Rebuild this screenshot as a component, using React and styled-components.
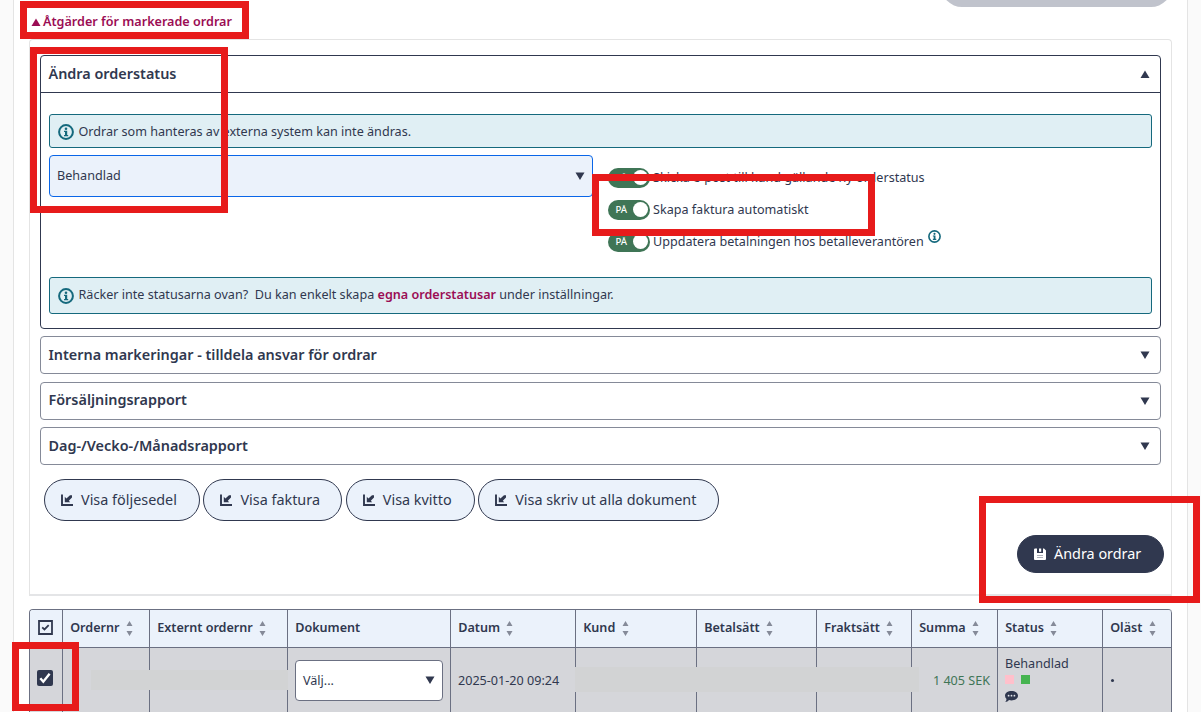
import React from "react";
import styled, { createGlobalStyle } from "styled-components";

const GlobalStyle = createGlobalStyle`
  * {
    box-sizing: border-box;
  }

  body {
    margin: 0;
    background: #fafafa;
    color: #30384f;
    font-family: "Noto Sans", sans-serif;
    font-size: 13px;
    overflow: hidden;
  }
`;

const Page = styled.div`
  position: relative;
  width: 1201px;
  height: 712px;
  overflow: hidden;
`;

const Content = styled.main`
  width: 1175px;
  height: 712px;
  margin-left: 13px;
  padding: 0 15px;
  background: #fff;
  border: solid #e4e4e4;
  border-width: 0 1px;
`;

const TopBar = styled.div`
  display: flex;
  justify-content: flex-end;
  height: 7px;
  overflow: hidden;
`;

const DisabledButton = styled.div`
  width: 231px;
  height: 42px;
  margin-top: -35px;
  border-radius: 21px;
  background: #c0c3cc;
`;

const Toggler = styled.div`
  display: flex;
  align-items: center;
  gap: 2px;
  height: 32px;
  padding: 0 0 4px 2px;
  color: #9b0d54;
  font-size: 12.6px;
  font-weight: 600;

  svg {
    margin-top: 2px;
  }
`;

const Actions = styled.section`
  height: 557px;
  padding: 15px 10px 0;
  border: 1px solid #e4e4e4;
  border-bottom: 2px solid #e4e5e7;
  border-radius: 4px 4px 0 0;
`;

const Panel = styled.div`
  height: ${(p) => (p.$open ? 274 : 38)}px;
  margin-bottom: ${(p) => p.$gap}px;
  border: 1px solid ${(p) => (p.$open ? "#30384f" : "#858a98")};
  border-radius: 4px;
`;

const PanelHeader = styled.div`
  display: flex;
  align-items: center;
  justify-content: space-between;
  height: ${(p) => (p.$open ? 37 : 36)}px;
  padding: 0 10px ${(p) => p.$lift ?? 1}px 7.5px;
  border-bottom: ${(p) => (p.$open ? "1px solid #30384f" : "none")};
  font-size: 14.4px;
  font-weight: 600;
  line-height: 20px;

  svg {
    margin-top: ${(p) => p.$lift ?? 1}px;
  }
`;

const PanelBody = styled.div`
  padding: 21px 8px 0;
`;

const Info = styled.div`
  display: flex;
  align-items: center;
  height: ${(p) => p.$height}px;
  padding: 0 0 ${(p) => p.$lift || 0}px 8px;
  border: 1px solid #15697d;
  border-radius: 3px;
  background: #e0eff4;
  font-size: 12.6px;
  white-space: pre;

  svg {
    flex: none;
    margin: ${(p) => p.$lift || 2}px 4.5px 0 0;
  }
`;

const Link = styled.a`
  color: #9b0d54;
  font-weight: 600;
`;

const StatusRow = styled.div`
  display: flex;
  gap: 15px;
  height: 129px;
  padding-top: 7px;
`;

const Select = styled.div`
  display: flex;
  align-items: center;
  justify-content: space-between;
  width: ${(p) => p.$width}px;
  height: ${(p) => p.$height}px;
  padding: 0 7px ${(p) => (p.$active ? 2 : 0)}px;
  border: 1px solid ${(p) => (p.$active ? "#0a66e8" : "#6b7082")};
  border-radius: 4px;
  background: ${(p) => (p.$active ? "#ebf2fb" : "#fff")};
  font-size: 12.6px;

  svg {
    margin-top: ${(p) => (p.$active ? 2 : 0)}px;
  }
`;

const Switches = styled.div`
  display: flex;
  flex-direction: column;
  gap: 12px;
  padding-top: 12px;
`;

const SwitchRow = styled.div`
  display: flex;
  align-items: center;
  height: 20px;
  font-size: 12.6px;
  white-space: nowrap;

  > svg {
    margin: -9px 0 0 4px;
  }
`;

const Switch = styled.span`
  display: flex;
  align-items: center;
  justify-content: space-between;
  width: 42px;
  height: 20px;
  margin: 1px 3px 0 0;
  padding: 0 2px 0 7.5px;
  border-radius: 10px;
  background: #3f7556;
  color: #fff;
  font-size: 9.6px;
  font-weight: 500;
`;

const Knob = styled.span`
  width: 15px;
  height: 15px;
  border-radius: 50%;
  background: #fff;
`;

const DocumentButtons = styled.div`
  display: flex;
  gap: 3.4px;
  padding-left: 4px;
`;

const Button = styled.button`
  display: flex;
  align-items: center;
  width: ${(p) => p.$width}px;
  height: ${(p) => (p.$primary ? 38 : 42)}px;
  padding: 0 0 2px 16px;
  border: 1px solid #30384f;
  border-radius: 21px;
  background: ${(p) => (p.$primary ? "#30384f" : "#ebf2fb")};
  color: ${(p) => (p.$primary ? "#fff" : "#30384f")};
  font: 400 14.4px "Noto Sans", sans-serif;
  white-space: nowrap;

  svg {
    flex: none;
    margin: 2px 8px 0 0;
  }
`;

const SubmitRow = styled.div`
  display: flex;
  justify-content: flex-end;
  padding: 14px 0 0;
  margin-right: -3px;
`;

const Table = styled.div`
  display: grid;
  grid-template-columns: 33px 87px 138px 163px 125px 121px 120px 95px 86px 105px 69px;
  width: 1143px;
  margin-top: 13px;
  border-left: 1px solid #6b7082;
  border-top: 1px solid #6b7082;
  border-radius: 4px 4px 0 0;
  overflow: hidden;
`;

const HeadCell = styled.div`
  display: flex;
  align-items: center;
  gap: 6.4px;
  height: 38px;
  padding: 0 0 2px 7.2px;
  border: solid #6b7082;
  border-width: 0 1px 1px 0;
  background: #ebf2fb;
  font-size: 12.6px;
  font-weight: 600;
  white-space: nowrap;

  svg {
    margin-top: 1px;
  }
`;

const LastHeadCell = styled(HeadCell)`
  border-top-right-radius: 3px;
`;

const SelectAllCell = styled(HeadCell)`
  padding: 0 0 3px 8px;
`;

const Cell = styled.div`
  display: flex;
  align-items: center;
  justify-content: ${(p) => (p.$right ? "flex-end" : "flex-start")};
  height: 66px;
  padding: 0 7px ${(p) => (p.$lift ?? 1)}px;
  border-right: 1px solid #6b7082;
  background: #d5d6da;
  color: ${(p) => (p.$right ? "#3f7556" : "#30384f")};
  font-size: 12.6px;
  white-space: nowrap;
`;

const Status = styled.div`
  display: flex;
  flex-direction: column;
  height: 66px;
  padding-top: 7px;
  line-height: 18px;

  svg {
    margin-top: 7px;
  }
`;

const Marks = styled.div`
  display: flex;
  gap: 7px;
  margin-top: 2px;
`;

const Mark = styled.span`
  width: 9px;
  height: 9px;
  background: ${(p) => p.$color};
`;

const Bullet = styled.span`
  width: 3px;
  height: 3px;
  margin-left: 1px;
  border-radius: 50%;
  background: #30384f;
`;

// Covers customer data in the table row
const Redaction = styled.div`
  position: absolute;
  left: ${(p) => p.$x}px;
  top: ${(p) => p.$y}px;
  width: ${(p) => p.$w}px;
  height: ${(p) => p.$h}px;
  background: #d2d3d4;
`;

const Highlight = styled.div`
  position: absolute;
  left: ${(p) => p.$x}px;
  top: ${(p) => p.$y}px;
  width: ${(p) => p.$w}px;
  height: ${(p) => p.$h}px;
  border: 7px solid #e71b1b;
`;

const Triangle = ({ up, size = 10 }) => (
  <svg width={size} height={size * 0.85} viewBox="0 0 10 8.5">
    <path d={up ? "M5 0.5 9.5 8H0.5Z" : "M5 8 9.5 0.5H0.5Z"} fill="currentColor" />
  </svg>
);

const InfoIcon = ({ size = 16 }) => (
  <svg width={size} height={size} viewBox="0 0 16 16" fill="#15697d">
    <circle cx="8" cy="8" r="6.9" fill="none" stroke="#15697d" strokeWidth="2" />
    <circle cx="8" cy="4.7" r="1.3" />
    <path d="M6 6.7h3.200v4.200h1v1.300H6v-1.300h1V8H6z" />
  </svg>
);

const OpenIcon = () => (
  <svg width="12" height="12" viewBox="0 0 12 12">
    <path d="M1 0.5V11h11" fill="none" stroke="#30384f" strokeWidth="1.9" />
    <path d="M3.8 2.800v5.400h5.400L7.800 6.800l3.200-3.200V1.200H9L5.400 4.400z" fill="#30384f" />
  </svg>
);

const SaveIcon = () => (
  <svg width="12" height="12" viewBox="0 0 12 12">
    <path d="M1.2 0.500H3V5h6V0.500h1l2 2V11q0 1-1 1H1q-1 0-1-1V1.700q0-1.200 1.200-1.200z" fill="#fff" />
    <path d="M5 0.500h2.200v3.300H5z" fill="#fff" />
    <path d="M3 7.500h6M3 9.500h6" stroke="#a6a9b3" strokeWidth=".9" />
  </svg>
);

const SortIcon = () => (
  <svg width="7" height="15" viewBox="0 0 7 15" fill="#858a98">
    <path d="M3.500 0 6.500 5h-6zM3.500 15 6.500 10h-6z" />
  </svg>
);

const CheckOutline = () => (
  <svg width="15" height="15" viewBox="0 0 15 15" fill="none" stroke="#30384f">
    <path d="M1 1h13v13H1z" strokeWidth="1.8" />
    <path d="m4.200 7.300 2.300 2.200 4.200-4.300" strokeWidth="1.8" />
  </svg>
);

const CheckFilled = () => (
  <svg width="16" height="16" viewBox="0 0 16 16">
    <rect width="16" height="16" rx="2" fill="#30384f" />
    <path d="m3.300 8.300 3 3.400 6.300-7.900" fill="none" stroke="#fff" strokeWidth="2.4" />
  </svg>
);

const CommentIcon = () => (
  <svg width="13" height="11" viewBox="0 0 13 11">
    <path d="M6.500 0C10.100 0 13 2 13 4.700s-2.900 4.700-6.500 4.700q-1.300 0-2.400-.4Q2.500 10.800.3 11q1.200-1.500 1.200-2.900Q0 6.600 0 4.700C0 2 2.900 0 6.500 0z" fill="#30384f" />
    <g fill="#e4e6eb">
      <circle cx="3.6" cy="4.7" r=".9" />
      <circle cx="6.5" cy="4.7" r=".9" />
      <circle cx="9.4" cy="4.7" r=".9" />
    </g>
  </svg>
);

const documents = [
  { label: "Visa följesedel", width: 156 },
  { label: "Visa faktura", width: 139 },
  { label: "Visa kvitto", width: 129 },
  { label: "Visa skriv ut alla dokument", width: 241 },
];

const columns = [
  { label: "Ordernr", sort: true },
  { label: "Externt ordernr", sort: true },
  { label: "Dokument" },
  { label: "Datum", sort: true },
  { label: "Kund", sort: true },
  { label: "Betalsätt", sort: true },
  { label: "Fraktsätt", sort: true },
  { label: "Summa", sort: true },
  { label: "Status", sort: true },
];

const SwitchOption = ({ label, info }) => (
  <SwitchRow>
    <Switch>
      PÅ
      <Knob />
    </Switch>
    {label}
    {info && <InfoIcon size={13} />}
  </SwitchRow>
);

const ClosedPanel = ({ title, gap, lift }) => (
  <Panel $gap={gap}>
    <PanelHeader $lift={lift}>
      {title}
      <Triangle />
    </PanelHeader>
  </Panel>
);

export default function App() {
  return (
    <Page>
      <GlobalStyle />
      <Content>
        <TopBar>
          <DisabledButton />
        </TopBar>
        <Toggler>
          <Triangle up size={10} />
          Åtgärder för markerade ordrar
        </Toggler>
        <Actions>
          <Panel $open $gap={7}>
            <PanelHeader $open>
              Ändra orderstatus
              <Triangle up />
            </PanelHeader>
            <PanelBody>
              <Info $height={34}>
                <InfoIcon />
                Ordrar som hanteras av externa system kan inte ändras.
              </Info>
              <StatusRow>
                <Select $active $width={544} $height={42}>
                  Behandlad
                  <Triangle />
                </Select>
                <Switches>
                  <SwitchOption label="Skicka e-post till kund gällande ny orderstatus" />
                  <SwitchOption label="Skapa faktura automatiskt" />
                  <SwitchOption label="Uppdatera betalningen hos betalleverantören" info />
                </Switches>
              </StatusRow>
              <Info $height={37} $lift={2}>
                <InfoIcon />
                {"Räcker inte statusarna ovan?  Du kan enkelt skapa "}
                <Link>egna orderstatusar</Link>
                {" under inställningar."}
              </Info>
            </PanelBody>
          </Panel>
          <ClosedPanel title="Interna markeringar - tilldela ansvar för ordrar" gap={8} />
          <ClosedPanel title="Försäljningsrapport" gap={7} lift={2} />
          <ClosedPanel title="Dag-/Vecko-/Månadsrapport" gap={14} />
          <DocumentButtons>
            {documents.map((doc) => (
              <Button key={doc.label} $width={doc.width}>
                <OpenIcon />
                {doc.label}
              </Button>
            ))}
          </DocumentButtons>
          <SubmitRow>
            <Button $primary $width={147}>
              <SaveIcon />
              Ändra ordrar
            </Button>
          </SubmitRow>
        </Actions>
        <Table>
          <SelectAllCell>
            <CheckOutline />
          </SelectAllCell>
          {columns.map((column) => (
            <HeadCell key={column.label}>
              {column.label}
              {column.sort && <SortIcon />}
            </HeadCell>
          ))}
          <LastHeadCell>
            Oläst
            <SortIcon />
          </LastHeadCell>
          <Cell $lift={6}>
            <CheckFilled />
          </Cell>
          <Cell />
          <Cell />
          <Cell>
            <Select $width={148} $height={41}>
              Välj...
              <Triangle />
            </Select>
          </Cell>
          <Cell $lift={2}>2025-01-20 09:24</Cell>
          <Cell />
          <Cell />
          <Cell />
          <Cell $right $lift={2}>
            1 405 SEK
          </Cell>
          <Cell $lift={0}>
            <Status>
              Behandlad
              <Marks>
                <Mark $color="#ffc0cb" />
                <Mark $color="#46b450" />
              </Marks>
              <CommentIcon />
            </Status>
          </Cell>
          <Cell>
            <Bullet />
          </Cell>
        </Table>
      </Content>
      <Redaction $x={91} $y={670} $w={197} $h={20} />
      <Redaction $x={575} $y={667} $w={344} $h={25} />
      <Highlight $x={20} $y={1} $w={229} $h={38} />
      <Highlight $x={30} $y={47} $w={198} $h={166} />
      <Highlight $x={592} $y={174} $w={283} $h={62} />
      <Highlight $x={979} $y={496} $w={221} $h={107} />
      <Highlight $x={12} $y={642} $w={67} $h={69} />
    </Page>
  );
}
